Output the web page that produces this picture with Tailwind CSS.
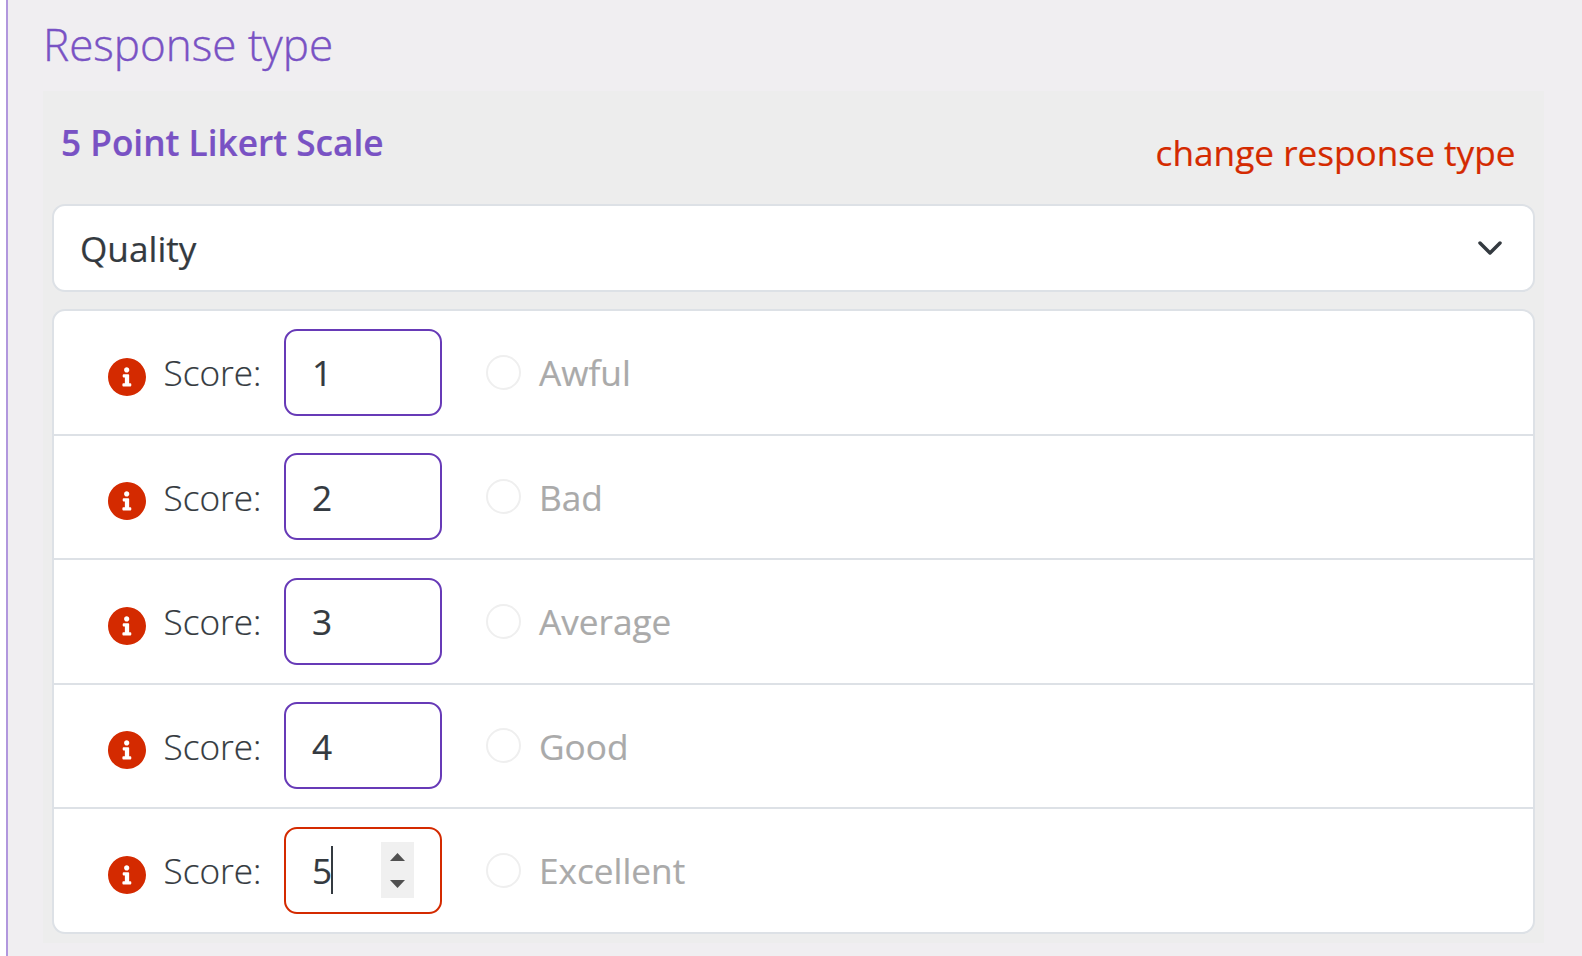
<!DOCTYPE html>
<html lang="en">
<head>
    <meta charset="UTF-8">
    <meta name="viewport" content="width=device-width, initial-scale=1.0">
    <script src="https://cdn.jsdelivr.net/npm/@tailwindcss/browser@4"></script>
    <title>Response type</title>
</head>
<body class="bg-white pl-[6px] h-screen overflow-hidden font-['Open_Sans',sans-serif] text-[35.2px] leading-[54px] text-[#343a40] [-webkit-text-stroke:0.2px]">

    <main class="border-l-2 border-[#b197dd] bg-[#f0eef1] h-full pl-[35px] pr-[38px] pt-[17px]">
        <h1 class="text-[44px] leading-[54px] font-light text-[#7952c4] [-webkit-text-stroke:0.4px]">Response type</h1>

        <section class="bg-[#ededed] mt-[20px] h-[852px] pl-[9px] pr-[9px]">
            <div class="flex justify-between h-[113px] pl-[9px] pr-[19.5px]">
                <h2 class="font-semibold text-[#7952c4] mt-[24px]">5 Point Likert Scale</h2>
                <a href="#" class="text-[#d42a00] mt-[34px]">change response type</a>
            </div>

            <div class="flex items-center justify-between h-[88px] bg-white border-2 border-[#dde1e6] rounded-[13px] pl-[26px] pr-[31px]">
                <span>Quality</span>
                <svg class="w-6 h-[14px]" viewBox="0 0 24 14" fill="none" stroke="#343a40" stroke-width="3.5" stroke-linecap="round" stroke-linejoin="round"><path d="M2 2l10 10L22 2"/></svg>
            </div>

            <ul id="scores" class="mt-[17px] bg-white border-2 border-[#dde1e6] rounded-[13px] divide-y-2 divide-[#dde1e6]"></ul>
        </section>
    </main>

<script>

    const scores = document.getElementById('scores')
    const labels = ['Awful', 'Bad', 'Average', 'Good', 'Excellent']

    labels.forEach((label, i) => {
        const active = i === labels.length - 1
        const li = document.createElement('li')
        li.className = 'flex items-center pl-[53.5px] h-[124.5px] last:h-[122.5px]'
        li.innerHTML = `
            <svg class="w-[38px] h-[38px] mt-[9px]" viewBox="8 8 496 496" fill="#d42a00"><path d="M256 8C119 8 8 119 8 256s111 248 248 248 248-111 248-248S393 8 256 8zm-4 122c19 0 34 15 34 34s-15 34-34 34-34-15-34-34 15-34 34-34zm60 238c0 7-5 12-12 12h-92c-7 0-12-5-12-12v-18c0-7 5-12 12-12h20v-76h-16c-7 0-12-5-12-12v-18c0-7 5-12 12-12h60c7 0 12 5 12 12v106h16c7 0 12 5 12 12z"/></svg>
            <span class="w-[138.5px] pl-[18px] font-light">Score:</span>
            <div class="flex items-center w-[158px] h-[87px] border-2 rounded-[13px] pl-[26px] ${active ? 'border-[#d42a00]' : 'border-[#673ab7]'}">
                <span>${i + 1}</span>
                ${active ? `
                <span class="w-[2px] h-12 bg-[#343a40] -ml-[1px]"></span>
                <svg class="w-[33px] h-[56px] ml-[48px]" viewBox="0 0 33 56"><path fill="#f0f0f0" d="M0 0h33v56H0z"/><path fill="#505050" d="M9 19l7.500-8L24 19zM9 38l7.500 8L24 38z"/></svg>` : ''}
            </div>
            <span class="w-[35px] h-[35px] ml-[44px] mr-[18px] rounded-full border-2 border-[#efefef]"></span>
            <span class="text-[#aaa]">${label}</span>`
        scores.appendChild(li)
    })

</script>
</body>
</html>
